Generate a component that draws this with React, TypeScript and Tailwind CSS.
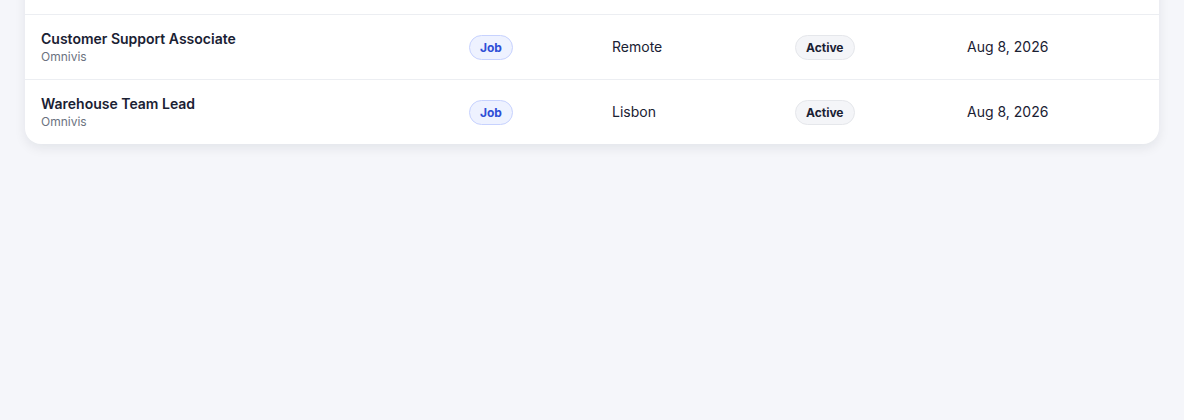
import React from 'react';

type Row = {
  title: string;
  company: string;
  type: string;
  location: string;
  status: string;
  date: string;
};

const rows: Row[] = [
  { title: 'Customer Support Associate', company: 'Omnivis', type: 'Job', location: 'Remote', status: 'Active', date: 'Aug 8, 2026' },
  { title: 'Warehouse Team Lead', company: 'Omnivis', type: 'Job', location: 'Lisbon', status: 'Active', date: 'Aug 8, 2026' },
];

const cols = 'grid grid-cols-[428px_143px_183px_172px_1fr] items-center px-4';

export default function App() {
  return (
    <div className="flex h-[420px] flex-col bg-[#f5f6fa] px-[25px] font-['Inter',sans-serif] text-[#1a2133]">
      {/* table is scrolled: its top part sits above the window */}
      <div className="-mt-[30px] overflow-hidden rounded-2xl bg-white shadow-[0_4px_12px_rgba(15,23,42,0.08)]">
        <div className="h-[44px]" />
        {rows.map((row, i) => (
          <div key={i} className={`${cols} h-[65px] border-t border-[#eceef2]`}>
            <div className="flex flex-col">
              <span className="text-sm font-semibold leading-5">{row.title}</span>
              <span className="text-xs leading-4 text-[#6b7280]">{row.company}</span>
            </div>
            <div>
              <span className="inline-flex h-[25px] items-center rounded-full border border-[#c7d2fe] bg-[#eef2ff] px-[10px] text-xs font-bold text-[#2f4fd6]">
                {row.type}
              </span>
            </div>
            <span className="text-sm">{row.location}</span>
            <div>
              <span className="inline-flex h-[25px] items-center rounded-full border border-[#e5e7eb] bg-[#f4f5f8] px-[10px] text-xs font-bold">
                {row.status}
              </span>
            </div>
            <span className="text-sm">{row.date}</span>
          </div>
        ))}
      </div>
    </div>
  );
}
